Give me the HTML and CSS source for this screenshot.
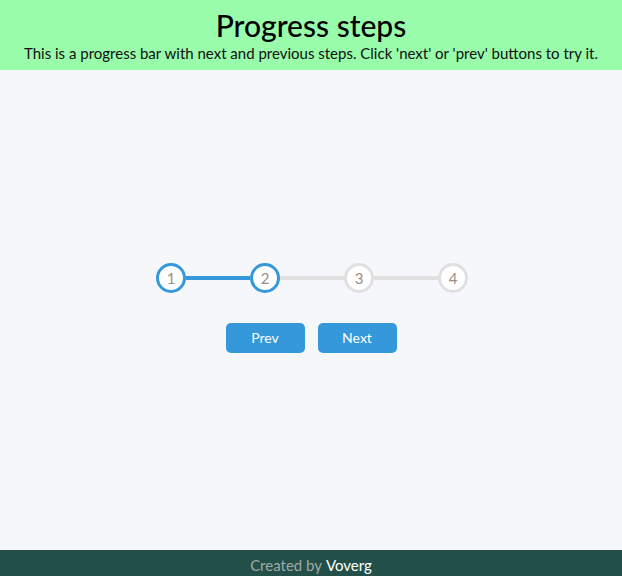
FILE: index.html
```html
<!DOCTYPE html>
<html>
<head>
<meta charset="utf-8">
<link rel="stylesheet" href="styles.css">
</head>
<body>
<header class="header">
  <h1 class="title">Progress steps</h1>
  <p class="subtitle">This is a progress bar with next and previous steps. Click 'next' or 'prev' buttons to try it.</p>
</header>
<main class="main">
  <div class="steps">
    <div class="circle active">1</div>
    <div class="line active"></div>
    <div class="circle active">2</div>
    <div class="line"></div>
    <div class="circle">3</div>
    <div class="line"></div>
    <div class="circle">4</div>
  </div>
  <div class="buttons">
    <button class="btn">Prev</button>
    <button class="btn">Next</button>
  </div>
</main>
<footer class="footer">Created by <span class="author">Voverg</span></footer>
</body>
</html>
```
FILE: styles.css
```css
* { box-sizing: border-box; }
html, body { height: 100%; }
body {
  margin: 0;
  display: flex;
  flex-direction: column;
  background: #f6f7fb;
  font-family: Lato, "Open Sans", sans-serif;
}
.header {
  background: #98fcaa;
  height: 70px;
  display: flex;
  flex-direction: column;
  align-items: center;
  padding-top: 8px;
}
.title {
  margin: 0;
  font-size: 30px;
  font-weight: 500;
  line-height: 34px;
  color: #000;
}
.subtitle {
  margin: 2px 0 0;
  font-size: 15px;
  line-height: 18px;
  color: #111;
}
.main {
  flex: 1;
  display: flex;
  flex-direction: column;
  align-items: center;
  justify-content: center;
  padding: 0 0 5px 0;
}
.steps {
  display: flex;
  align-items: center;
  margin-left: 2px;
}
.circle {
  width: 30px;
  height: 30px;
  border-radius: 50%;
  border: 3px solid #e0e0e0;
  background: #fff;
  color: #9a8d85;
  font-size: 15px;
  display: flex;
  align-items: center;
  justify-content: center;
}
.circle.active { border-color: #3498db; }
.line {
  width: 64px;
  height: 4px;
  background: #e0e0e0;
}
.line.active { background: #3498db; }
.buttons {
  display: flex;
  gap: 13px;
  margin-top: 30px;
}
.btn {
  width: 79px;
  height: 30px;
  border: 0;
  border-radius: 5px;
  background: #3498db;
  color: #fff;
  font-family: inherit;
  font-size: 14px;
  padding: 0;
}
.footer {
  height: 26px;
  background: #224f48;
  color: #a3a8a6;
  font-size: 15px;
  display: flex;
  align-items: center;
  justify-content: center;
  gap: 4px;
  padding-top: 4px;
}
.author { color: #fff; }
```
